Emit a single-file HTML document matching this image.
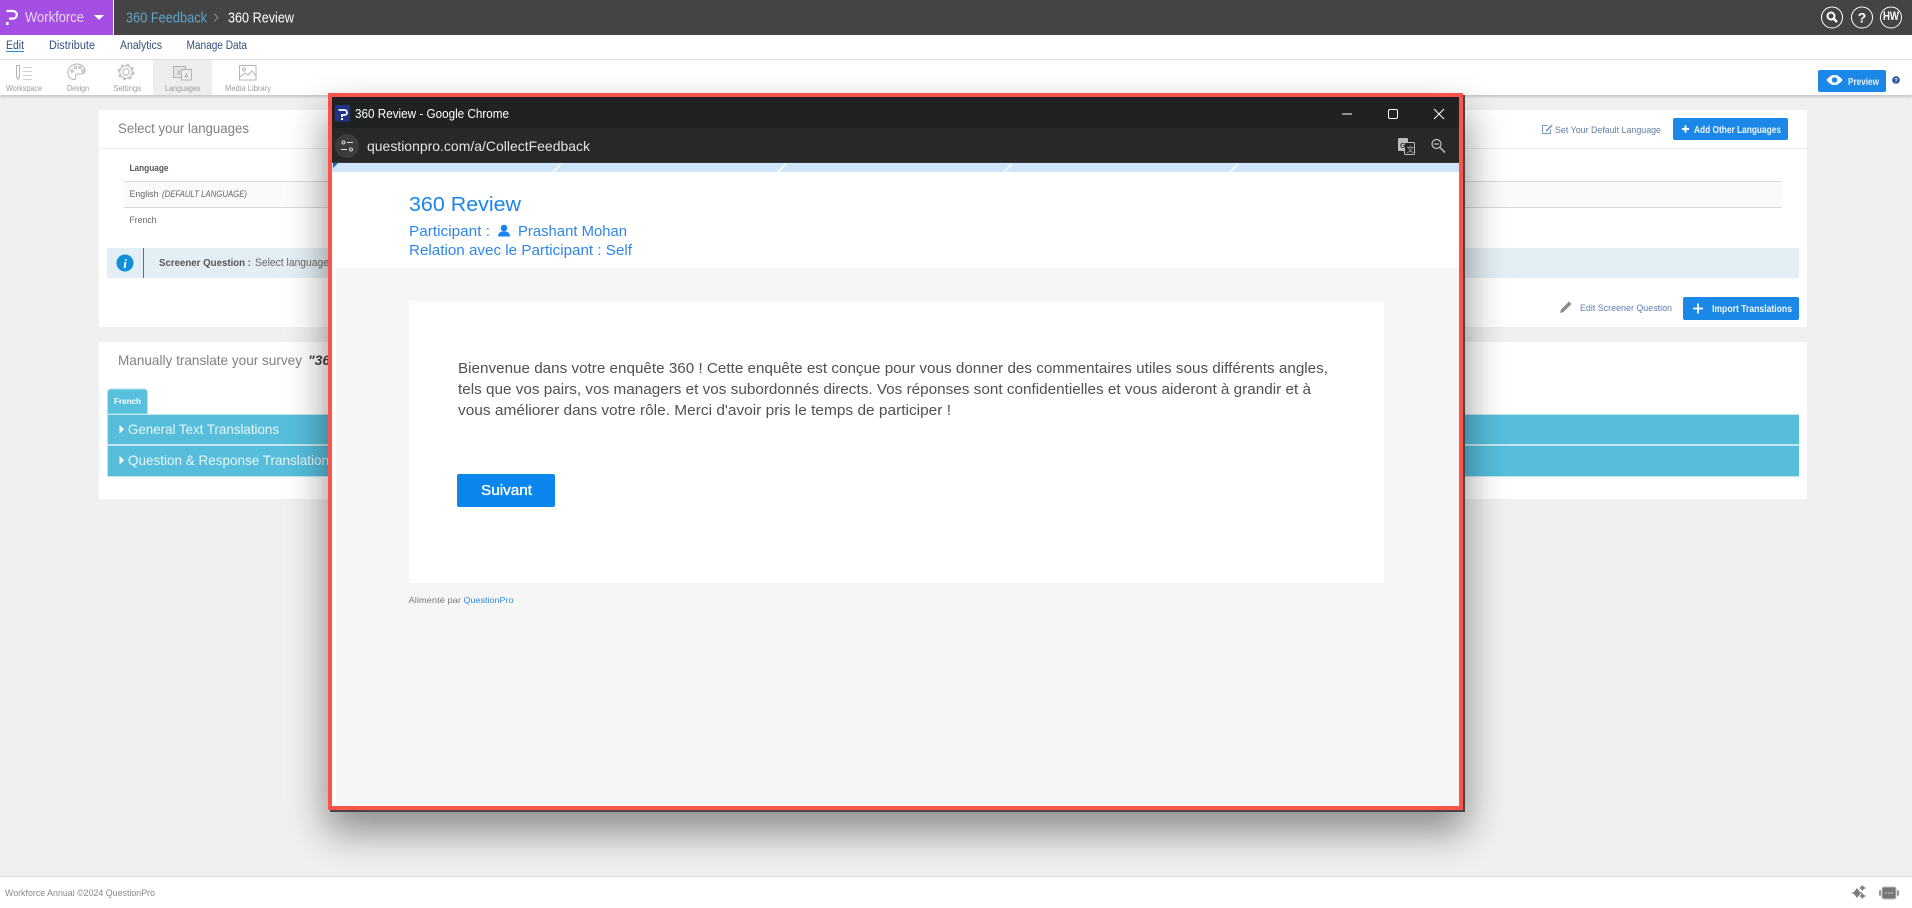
<!DOCTYPE html>
<html lang="en">
<head>
<meta charset="utf-8">
<title>360 Review</title>
<style>
html,body{margin:0;padding:0;width:1912px;height:908px;overflow:hidden;background:#f0f0f0}
svg{display:block}
text{font-family:"Liberation Sans",sans-serif;white-space:pre}
</style>
</head>
<body>
<svg width="1912" height="908" viewBox="0 0 1912 908" xmlns="http://www.w3.org/2000/svg">
<defs>
<filter id="blur" x="-20%" y="-20%" width="140%" height="140%"><feGaussianBlur stdDeviation="20"/></filter>
<filter id="soft" x="-5%" y="-100%" width="110%" height="300%"><feGaussianBlur stdDeviation="1"/></filter>
</defs>

<!-- Top bar -->
<rect x="0" y="0" width="1912" height="35" fill="#444444"/>
<rect x="0" y="0" width="113" height="35" fill="#a44ee3"/>
<rect x="113" y="0" width="1" height="35" fill="#ffffff"/>
<path d="M6.500 11h6.500a3.800 3.800 0 0 1 0 7.600H9" fill="none" stroke="#fff" stroke-width="2.200"/>
<rect x="6" y="22" width="2.600" height="3" fill="#fff"/>
<text x="25" y="22" font-size="14.500" fill="#e9d6f8" textLength="59" lengthAdjust="spacingAndGlyphs">Workforce</text>
<path d="M94 15h10l-5 5z" fill="#fff"/>
<text x="126" y="22.500" font-size="14.500" fill="#5fa4c9" textLength="81" lengthAdjust="spacingAndGlyphs">360 Feedback</text>
<path d="M214 13.500l4 4-4 4" fill="none" stroke="#8a8a8a" stroke-width="1"/>
<text x="228" y="22.500" font-size="14.500" fill="#ffffff" textLength="66" lengthAdjust="spacingAndGlyphs">360 Review</text>

<circle cx="1832" cy="17.500" r="10.500" fill="none" stroke="#fff" stroke-width="1"/>
<circle cx="1831" cy="16" r="3.500" fill="none" stroke="#fff" stroke-width="2"/>
<path d="M1833.500 18.500l3.500 3.500" stroke="#fff" stroke-width="2.500"/>
<circle cx="1862" cy="17.500" r="10.500" fill="none" stroke="#fff" stroke-width="1"/>
<text x="1862" y="22.500" font-size="14" font-weight="bold" fill="#fff" text-anchor="middle">?</text>
<circle cx="1891" cy="17.500" r="10.500" fill="none" stroke="#fff" stroke-width="1"/>
<text x="1883" y="20" font-size="11.500" font-weight="bold" fill="#fff" textLength="16" lengthAdjust="spacingAndGlyphs">HW</text>

<!-- Sub navigation -->
<rect x="0" y="35" width="1912" height="24" fill="#ffffff"/>
<rect x="0" y="59" width="1912" height="1" fill="#dddddd"/>
<g font-size="11.500" fill="#33507f">
<text x="6" y="49" textLength="18" lengthAdjust="spacingAndGlyphs">Edit</text>
<text x="49" y="49" textLength="46" lengthAdjust="spacingAndGlyphs">Distribute</text>
<text x="120" y="49" textLength="42" lengthAdjust="spacingAndGlyphs">Analytics</text>
<text x="186.500" y="49" textLength="60.500" lengthAdjust="spacingAndGlyphs">Manage Data</text>
</g>
<rect x="6" y="51" width="18" height="1" fill="#2b8ac6"/>

<!-- Toolbar -->
<rect x="0" y="94" width="1912" height="3" fill="#000" opacity=".18" filter="url(#soft)"/>
<rect x="0" y="60" width="1912" height="35" fill="#ffffff"/>
<rect x="153" y="60" width="59" height="35" fill="#eeeeee"/>
<g fill="none" stroke="#b5b5b5" stroke-width="1">
<path d="M16.500 65.500h3v11l-1.500 3-1.500-3z"/>
<path d="M23 67.500h9M23 71.500h9M23 75.500h9M23 79.500h9" stroke="#cfcfcf"/>
<path d="M77 64a9 8.500 0 0 0-9 9c0 4.500 3.500 6.500 6 6.500 2 0 2-1.500 1.500-3-.5-1.500.5-2.500 2-2.500h3.500c2.500 0 4-1.500 4-3.500 0-3.500-3.500-6.500-8-6.500z"/>
<circle cx="72" cy="71" r="1.200"/><circle cx="75.500" cy="67.500" r="1.200"/><circle cx="80" cy="67.500" r="1.200"/><circle cx="83" cy="71" r="1.200"/>
<circle cx="126" cy="72" r="6.200"/>
<circle cx="126" cy="72" r="3.200"/>
<circle cx="126" cy="72" r="7.600" stroke="#c6c6c6" stroke-width="1.800" stroke-dasharray="3 3"/>
<rect x="173.500" y="66.500" width="12" height="11" fill="#e4e4e4"/>
<rect x="181.500" y="69.500" width="10" height="10.500" fill="#eeeeee"/>
<rect x="239.500" y="65.500" width="16.500" height="14.500"/>
<circle cx="244" cy="69.500" r="1.500"/>
<path d="M240 77l5-4 3 2 4-4 4 5"/>
</g>
<text x="177" y="74.500" font-size="5.500" fill="#888">X</text>
<text x="184.500" y="77.500" font-size="5.500" fill="#888">A</text>
<g font-size="8.500" fill="#9c9c9c">
<text x="6" y="91" textLength="36" lengthAdjust="spacingAndGlyphs">Workspace</text>
<text x="67" y="91" textLength="22" lengthAdjust="spacingAndGlyphs">Design</text>
<text x="113.500" y="91" textLength="27.500" lengthAdjust="spacingAndGlyphs">Settings</text>
<text x="165" y="91" textLength="35.500" lengthAdjust="spacingAndGlyphs">Languages</text>
<text x="225" y="91" textLength="46" lengthAdjust="spacingAndGlyphs">Media Library</text>
</g>
<rect x="1818" y="70" width="68" height="22" rx="2" fill="#1b87e6"/>
<path d="M1826.500 80c2.500-3.500 5-5 8-5s5.500 1.500 8 5c-2.500 3.500-5 5-8 5s-5.500-1.500-8-5z" fill="#fff"/>
<circle cx="1834.500" cy="80" r="2.700" fill="#1b87e6"/>
<text x="1848" y="85" font-size="10" font-weight="bold" fill="#e6f2fc" textLength="31" lengthAdjust="spacingAndGlyphs">Preview</text>
<circle cx="1896" cy="80" r="3.800" fill="#1c4f93"/>
<text x="1896" y="82.500" font-size="6.500" font-weight="bold" fill="#fff" text-anchor="middle">?</text>

<!-- Card 1 -->
<rect x="99" y="110" width="1708" height="217" fill="#ffffff"/>
<rect x="99" y="148" width="1708" height="1" fill="#ecedf2"/>
<text x="118" y="133" font-size="14" fill="#808080" textLength="131" lengthAdjust="spacingAndGlyphs">Select your languages</text>
<path d="M1547.500 125.500h-5v8h8v-4" fill="none" stroke="#7e9cc0" stroke-width="1"/>
<path d="M1546 130l5.500-5.500 1.200 1.200-5.500 5.500-1.500.3z" fill="#7e9cc0"/>
<text x="1555" y="133" font-size="9.500" fill="#5f7da6" textLength="106" lengthAdjust="spacingAndGlyphs">Set Your Default Language</text>
<rect x="1673" y="118" width="115" height="22" rx="2" fill="#1b87e6"/>
<path d="M1682 129h7M1685.500 125.500v7" stroke="#fff" stroke-width="2"/>
<text x="1694" y="133" font-size="10" font-weight="bold" fill="#eef6fd" textLength="87" lengthAdjust="spacingAndGlyphs">Add Other Languages</text>

<text x="129.500" y="171" font-size="9.500" font-weight="bold" fill="#555" textLength="39" lengthAdjust="spacingAndGlyphs">Language</text>
<rect x="124" y="181" width="1658" height="26" fill="#fafafa"/>
<rect x="124" y="181" width="1658" height="1" fill="#d9d9d9"/>
<rect x="124" y="207" width="1658" height="1" fill="#d9d9d9"/>
<text x="129.500" y="197" font-size="9.500" fill="#666" textLength="29" lengthAdjust="spacingAndGlyphs">English</text>
<text x="162" y="197" font-size="9" font-style="italic" fill="#666" textLength="85" lengthAdjust="spacingAndGlyphs">(DEFAULT LANGUAGE)</text>
<text x="129.500" y="223" font-size="9.500" fill="#666" textLength="27" lengthAdjust="spacingAndGlyphs">French</text>

<rect x="107" y="248" width="1692" height="30" fill="#e4eff5"/>
<rect x="143" y="248" width="1" height="30" fill="#1a85c8"/>
<circle cx="125" cy="263" r="8.500" fill="#0f8fdc"/>
<text x="125" y="268" font-size="13" font-weight="bold" font-style="italic" fill="#fff" text-anchor="middle" style="font-family:'Liberation Serif',serif">i</text>
<text x="159" y="266" font-size="10.500" font-weight="bold" fill="#555" textLength="92" lengthAdjust="spacingAndGlyphs">Screener Question :</text>
<text x="255" y="266" font-size="11" fill="#666" textLength="74" lengthAdjust="spacingAndGlyphs">Select language</text>

<path d="M1560 313l1-3.500 8-8 2.500 2.500-8 8z" fill="#8c8c8c"/>
<text x="1580" y="311" font-size="9.500" fill="#5f7db8" textLength="92" lengthAdjust="spacingAndGlyphs">Edit Screener Question</text>
<rect x="1683" y="297" width="116" height="23" rx="2" fill="#1b87e6"/>
<path d="M1693 308.500h10M1698 303.500v10" stroke="#fff" stroke-width="1.800"/>
<text x="1712" y="312" font-size="10" font-weight="bold" fill="#eef6fd" textLength="80" lengthAdjust="spacingAndGlyphs">Import Translations</text>

<!-- Card 2 -->
<rect x="99" y="342" width="1708" height="157" fill="#ffffff"/>
<text x="118" y="365" font-size="14" fill="#808080" textLength="184" lengthAdjust="spacingAndGlyphs">Manually translate your survey</text>
<text x="308" y="365" font-size="14" font-weight="bold" font-style="italic" fill="#444">"36</text>
<path d="M107.500 414v-22a3 3 0 0 1 3-3h34a3 3 0 0 1 3 3v22z" fill="#58c0dd" stroke="#b9e1ec" stroke-width="1"/>
<text x="114" y="404" font-size="8.500" font-weight="bold" fill="#fff" textLength="27" lengthAdjust="spacingAndGlyphs">French</text>
<rect x="107" y="414" width="1692" height="63" fill="#c4e6f0"/>
<rect x="108" y="415" width="1691" height="29" fill="#56bedb"/>
<rect x="108" y="446" width="1691" height="30" fill="#56bedb"/>
<path d="M119.500 425v8.500l4.500-4.250z" fill="#fff"/>
<path d="M119.500 456v8.500l4.500-4.250z" fill="#fff"/>
<text x="128" y="434" font-size="14" fill="#e8f7fb" textLength="151" lengthAdjust="spacingAndGlyphs">General Text Translations</text>
<text x="128" y="465" font-size="14" fill="#e8f7fb" textLength="201" lengthAdjust="spacingAndGlyphs">Question &amp; Response Translation</text>

<!-- Footer -->
<rect x="0" y="876" width="1912" height="32" fill="#ffffff"/>
<rect x="0" y="876" width="1912" height="1" fill="#dddddd"/>
<text x="5" y="896" font-size="9" fill="#888" textLength="150" lengthAdjust="spacingAndGlyphs">Workforce Annual ©2024 QuestionPro</text>
<path d="M1857 888l3 4 3 1-3 1-3 4-3-4-3-1 3-1z" fill="#7d7d7d"/>
<path d="M1862 886l2 2 2 1-2 1-2 2-1-2-2-1 2-1zM1862 894l2 2 2 1-2 1-2 2-1-2-2-1 2-1z" fill="#7d7d7d" transform="translate(0,-1)"/>
<rect x="1882" y="887" width="14" height="12" rx="2" fill="#777" stroke="#bbb" stroke-width="1"/>
<rect x="1879" y="890" width="2" height="6" rx="1" fill="#999"/>
<rect x="1897" y="890" width="2" height="6" rx="1" fill="#999"/>
<circle cx="1886" cy="893" r=".8" fill="#ddd"/><circle cx="1889" cy="893" r=".8" fill="#ddd"/><circle cx="1892" cy="893" r=".8" fill="#ddd"/>

<!-- Modal shadow -->
<rect x="326" y="112" width="1141" height="720" fill="#000" opacity=".42" filter="url(#blur)"/>
<rect x="330" y="95" width="1135" height="717" fill="#454545"/>
<!-- Modal frame -->
<rect x="328" y="93" width="1135" height="717" fill="#fb5549"/>
<!-- Modal content -->
<rect x="332" y="97" width="1127" height="709" fill="#f6f6f6"/>
<rect x="332" y="97" width="1127" height="31" fill="#202122"/>
<rect x="332" y="128" width="1127" height="35" fill="#282828"/>
<rect x="332" y="162" width="1127" height="1" fill="#3a3a3a"/>
<rect x="335" y="105" width="15" height="16.500" fill="#1f3583"/>
<path d="M338.500 110h6a2.300 2.300 0 0 1 0 5h-2.500v2" fill="none" stroke="#fff" stroke-width="1.800"/>
<rect x="341" y="118" width="2" height="2" fill="#fff"/>
<text x="355" y="118" font-size="13" fill="#ffffff" textLength="154" lengthAdjust="spacingAndGlyphs">360 Review - Google Chrome</text>
<path d="M1342 114h10" stroke="#ffffff" stroke-width="1"/>
<rect x="1388.500" y="109.500" width="9" height="9" rx="1.500" fill="none" stroke="#ffffff" stroke-width="1"/>
<path d="M1434 109l10 10M1444 109l-10 10" stroke="#ffffff" stroke-width="1"/>

<circle cx="347" cy="146" r="12" fill="#3c3c3c"/>
<circle cx="343.500" cy="142.500" r="1.500" fill="none" stroke="#ddd" stroke-width="1"/>
<path d="M347 142.500h6M341 149.500h6" stroke="#ddd" stroke-width="1"/>
<circle cx="351" cy="149.500" r="1.500" fill="none" stroke="#ddd" stroke-width="1"/>
<text x="367" y="151" font-size="14" fill="#e3e3e3" textLength="223" lengthAdjust="spacingAndGlyphs">questionpro.com/a/CollectFeedback</text>

<rect x="1398" y="138" width="10" height="13" rx="1" fill="#bdbdbd"/>
<rect x="1404.500" y="142.500" width="10" height="12" rx="1" fill="#282828" stroke="#bdbdbd" stroke-width="1"/>
<text x="1400" y="148" font-size="7" font-weight="bold" fill="#333">G</text>
<text x="1406.500" y="152" font-size="7.500" fill="#bdbdbd" style="font-family:'Liberation Sans','Noto Sans CJK SC',sans-serif">文</text>
<circle cx="1436.500" cy="144" r="4.500" fill="none" stroke="#c4c4c4" stroke-width="1.200"/>
<path d="M1434 144h5" stroke="#c4c4c4" stroke-width="1.200"/>
<path d="M1440 147.500l5 5" stroke="#c4c4c4" stroke-width="1.400"/>

<rect x="332" y="163" width="1127" height="9" fill="#cfe5f9"/>
<path d="M333 163h5l-5 5z" fill="#1a62b8"/>
<g stroke="#ffffff" stroke-width="1.500">
<path d="M561 164l-8 8M786 164l-8 8M1012 164l-8 8M1238 164l-8 8"/>
</g>
<rect x="336" y="172" width="1123" height="96" fill="#ffffff"/>
<rect x="332" y="172" width="4" height="634" fill="#ffffff"/>

<text x="409" y="211" font-size="20.500" fill="#1b85ef" textLength="112" lengthAdjust="spacingAndGlyphs">360 Review</text>
<g font-size="14.500" fill="#2f86ea">
<text x="409" y="236" textLength="81" lengthAdjust="spacingAndGlyphs">Participant :</text>
<text x="518" y="236" textLength="109" lengthAdjust="spacingAndGlyphs">Prashant Mohan</text>
<text x="409" y="255" textLength="223" lengthAdjust="spacingAndGlyphs">Relation avec le Participant : Self</text>
</g>
<circle cx="504" cy="228" r="3.300" fill="#1b85ef"/>
<path d="M498 236.500c0-3.800 2.500-5.300 6-5.300s6 1.500 6 5.300z" fill="#1b85ef"/>

<rect x="409" y="301" width="975" height="282" fill="#ffffff"/>
<g font-size="14.800" fill="#505154">
<text x="458" y="373" textLength="870" lengthAdjust="spacingAndGlyphs">Bienvenue dans votre enquête 360 ! Cette enquête est conçue pour vous donner des commentaires utiles sous différents angles,</text>
<text x="458" y="394" textLength="853" lengthAdjust="spacingAndGlyphs">tels que vos pairs, vos managers et vos subordonnés directs. Vos réponses sont confidentielles et vous aideront à grandir et à</text>
<text x="458" y="415" textLength="493" lengthAdjust="spacingAndGlyphs">vous améliorer dans votre rôle. Merci d'avoir pris le temps de participer !</text>
</g>
<rect x="457" y="474" width="98" height="33" rx="2" fill="#0a86ed"/>
<text x="481" y="495" font-size="14.500" fill="#ffffff" stroke="#ffffff" stroke-width=".3" textLength="51" lengthAdjust="spacingAndGlyphs">Suivant</text>
<text x="408.500" y="603" font-size="8.500" fill="#7a7a7a" textLength="52.500" lengthAdjust="spacingAndGlyphs">Alimenté par</text>
<text x="463.500" y="603" font-size="8.500" fill="#2f8ae6" textLength="50" lengthAdjust="spacingAndGlyphs">QuestionPro</text>
</svg>
</body>
</html>
